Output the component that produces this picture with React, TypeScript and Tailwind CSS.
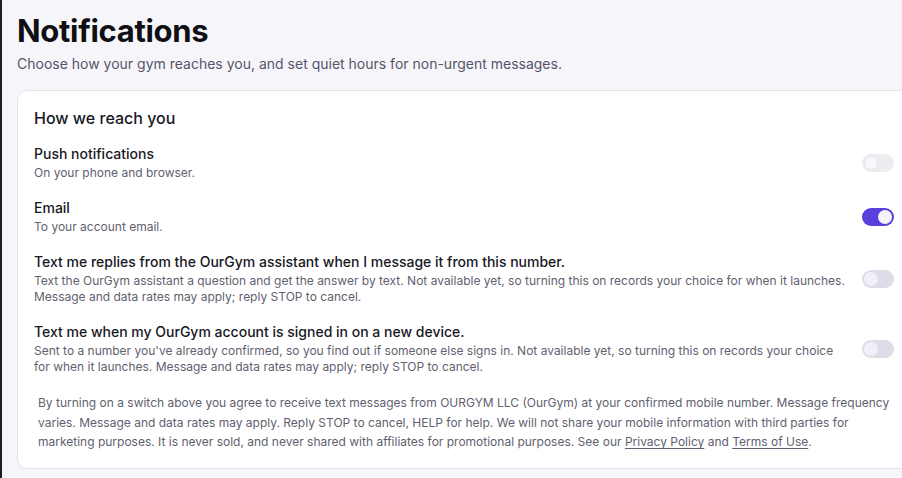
import React from "react";

// Notification preferences page — header, one settings card with toggle rows
// and an SMS consent footnote.

type Row = {
  title: string;
  desc: string;
  on: boolean;
  disabled?: boolean;
};

const rows: Row[] = [
  { title: "Push notifications", desc: "On your phone and browser.", on: false },
  { title: "Email", desc: "To your account email.", on: true },
  {
    title: "Text me replies from the OurGym assistant when I message it from this number.",
    desc: "Text the OurGym assistant a question and get the answer by text. Not available yet, so turning this on records your choice for when it launches. Message and data rates may apply; reply STOP to cancel.",
    on: false,
    disabled: true,
  },
  {
    title: "Text me when my OurGym account is signed in on a new device.",
    desc: "Sent to a number you've already confirmed, so you find out if someone else signs in. Not available yet, so turning this on records your choice for when it launches. Message and data rates may apply; reply STOP to cancel.",
    on: false,
    disabled: true,
  },
];

function Toggle({ on, disabled }: { on: boolean; disabled?: boolean }) {
  if (on) {
    return (
      <span className="flex h-[18px] w-[32px] shrink-0 items-center justify-end rounded-full bg-[#5a3fdd] px-[2px]">
        <span className="h-[14px] w-[14px] rounded-full bg-[#f4f3fc]" />
      </span>
    );
  }
  return (
    <span
      className={
        disabled
          ? "flex h-[18px] w-[32px] shrink-0 items-center rounded-full bg-[#dddce8] px-[2px]"
          : "flex h-[18px] w-[32px] shrink-0 items-center rounded-full bg-[#ececf1] px-[2px]"
      }
    >
      <span
        className={
          disabled
            ? "h-[14px] w-[14px] rounded-full bg-[#f1f0f7]"
            : "h-[14px] w-[14px] rounded-full border border-[#e6e6ec] bg-[#f8f8fb]"
        }
      />
    </span>
  );
}

export default function App() {
  return (
    <div className="flex h-[478px] w-[902px] overflow-hidden bg-[#f6f6fa] font-['Inter','Liberation_Sans',sans-serif] text-[#18181f]">
      <div className="w-[2px] shrink-0 bg-[#1d1b2c]" />
      <main className="min-w-0 flex-1 pl-[15px] pt-[13px]">
        <h1 className="text-[31px] font-bold leading-[36px] tracking-[-0.01em] text-[#0f0f14]">
          Notifications
        </h1>
        <p className="mt-[5px] text-[14px] leading-[20px] text-[#55556a]">
          Choose how your gym reaches you, and set quiet hours for non-urgent messages.
        </p>

        <section className="mt-4 w-[894px] rounded-[10px] border border-[#e3e3ea] bg-white px-4 pb-4 pt-4">
          <h2 className="text-[16px] font-medium leading-[22px] text-[#18181f]">How we reach you</h2>

          <div className="mt-[15px] flex flex-col gap-[17px]">
            {rows.map((r) => (
              <div key={r.title} className="flex items-center gap-4">
                <div className="min-w-0 flex-1">
                  <div className="text-[14px] font-medium leading-[20px] text-[#18181f]">{r.title}</div>
                  <div className="mt-px text-[12px] leading-[16px] text-[#5f5f70]">{r.desc}</div>
                </div>
                <Toggle on={r.on} disabled={r.disabled} />
              </div>
            ))}
          </div>

          <p className="mt-[18px] pl-1 text-[12px] leading-[19.5px] text-[#5f5f70]">
            By turning on a switch above you agree to receive text messages from OURGYM LLC (OurGym) at your
            confirmed mobile number. Message frequency varies. Message and data rates may apply. Reply STOP to
            cancel, HELP for help. We will not share your mobile information with third parties for marketing
            purposes. It is never sold, and never shared with affiliates for promotional purposes. See our{" "}
            <a className="underline underline-offset-2">Privacy Policy</a> and{" "}
            <a className="underline underline-offset-2">Terms of Use</a>.
          </p>
        </section>
      </main>
    </div>
  );
}
